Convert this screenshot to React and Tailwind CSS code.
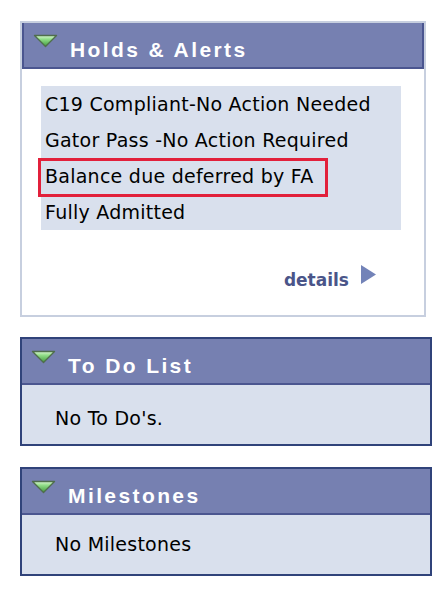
import React from "react";

function GreenTri() {
  return (
    <svg width="25" height="14" viewBox="0 0 25 14" className="shrink-0">
      <defs>
        <linearGradient id="gt" x1="0" y1="0" x2="0" y2="1">
          <stop offset="0" stopColor="#d9f7d2" />
          <stop offset="0.35" stopColor="#8fdc86" />
          <stop offset="1" stopColor="#3f9a3c" />
        </linearGradient>
      </defs>
      <polygon points="1.5,1.5 23.5,1.5 12.5,12.5" fill="url(#gt)" stroke="#4f6e4c" strokeWidth="1.4" strokeLinejoin="round" />
    </svg>
  );
}

function Header({ title, first }) {
  return (
    <div
      className={
        "flex items-start h-[46px] bg-[#7680b1] border-b-2 border-[#4b5690] " +
        (first ? "border-x-2" : "")
      }
    >
      <div className="pl-[9px] pt-[11px]">
        <GreenTri />
      </div>
      <div className="pl-[12px] pt-[15px] text-white font-bold text-[21px] leading-[24px] tracking-[2.4px] font-['Liberation_Sans',Arial,sans-serif]">
        {title}
      </div>
    </div>
  );
}

const body = "font-['DejaVu_Sans',Verdana,sans-serif] text-[19px] tracking-[0.25px] text-black";

export default function App() {
  return (
    <div className="w-[448px] h-[601px] bg-white pt-[21px] pl-[20px]">
      {/* Holds & Alerts */}
      <div className="w-[406px] h-[296px] border-2 border-[#c7cfdf] flex flex-col">
        <Header title="Holds & Alerts" first />
        <div className="flex-1 bg-white pt-[17px] pl-[19px] pr-[21px]">
          <div className={"bg-[#d9e0ed] w-[360px] " + body}>
            <div className="h-[36px] flex items-center pl-[4px]">C19 Compliant-No Action Needed</div>
            <div className="h-[36px] flex items-center pl-[4px]">Gator Pass -No Action Required</div>
            <div className="h-[36px] flex items-center pl-[4px] relative">
              <span>Balance due deferred by FA</span>
              <div className="absolute left-[-3px] top-0 w-[290px] h-[39px] border-[3px] border-[#e2203b]" />
            </div>
            <div className="h-[36px] flex items-center pl-[4px]">Fully Admitted</div>
          </div>
          <div className="flex justify-end items-start pr-[26px] mt-[35px]">
            <span className="mt-[4px] font-bold text-[17px] leading-[22px] text-[#4a5589] font-['DejaVu_Sans',Verdana,sans-serif]">
              details
            </span>
            <svg width="17" height="19" viewBox="0 0 17 19" className="ml-[11px]">
              <polygon points="1,0 16,9.5 1,19" fill="#7383b8" />
            </svg>
          </div>
        </div>
      </div>

      {/* To Do List */}
      <div className="mt-[20px] w-[412px] h-[109px] border-2 border-[#30437a] flex flex-col">
        <Header title="To Do List" />
        <div className={"flex-1 bg-[#d9e0ed] pl-[33px] pt-[21px] leading-[24px] " + body}>No To Do's.</div>
      </div>

      {/* Milestones */}
      <div className="mt-[21px] w-[412px] h-[109px] border-2 border-[#30437a] flex flex-col">
        <Header title="Milestones" />
        <div className={"flex-1 bg-[#d9e0ed] pl-[33px] pt-[17px] leading-[24px] " + body}>No Milestones</div>
      </div>
    </div>
  );
}
